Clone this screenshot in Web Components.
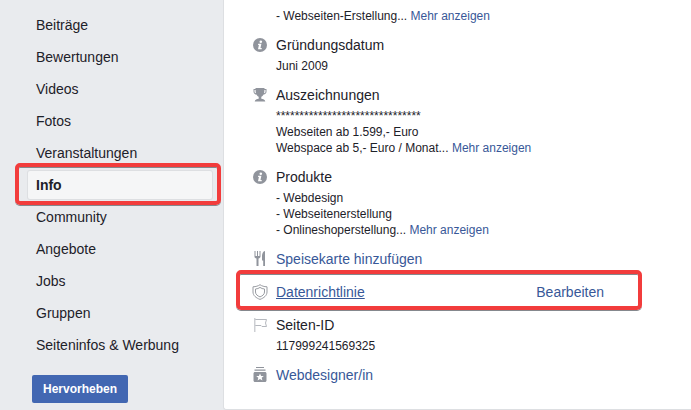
<!DOCTYPE html>
<html lang="de">
<head>
<meta charset="utf-8">
<title>Seiteninfo</title>
<style>
  body { margin: 0; background: #e9ebee; color: #1d2129; font: 14px/20px "Liberation Sans", Arial, sans-serif; }
</style>
</head>
<body>
<page-layout>
  <page-nav slot="nav">
    <nav-item>Beiträge</nav-item>
    <nav-item>Bewertungen</nav-item>
    <nav-item>Videos</nav-item>
    <nav-item>Fotos</nav-item>
    <nav-item>Veranstaltungen</nav-item>
    <nav-item current>Info</nav-item>
    <nav-item>Community</nav-item>
    <nav-item>Angebote</nav-item>
    <nav-item>Jobs</nav-item>
    <nav-item>Gruppen</nav-item>
    <nav-item>Seiteninfos &amp; Werbung</nav-item>
    <promote-button slot="action">Hervorheben</promote-button>
  </page-nav>
  <info-card>
    <info-row><text-line more>- Webseiten-Erstellung...</text-line></info-row>
    <info-row icon="info" heading="Gründungsdatum"><text-line>Juni 2009</text-line></info-row>
    <info-row icon="trophy" heading="Auszeichnungen">
      <text-line>*******************************</text-line>
      <text-line>Webseiten ab 1.599,- Euro</text-line>
      <text-line more>Webspace ab 5,- Euro / Monat...</text-line>
    </info-row>
    <info-row icon="info" heading="Produkte">
      <text-line>- Webdesign</text-line>
      <text-line>- Webseitenerstellung</text-line>
      <text-line more>- Onlineshoperstellung...</text-line>
    </info-row>
    <info-row icon="menu" heading="Speisekarte hinzufügen" link></info-row>
    <info-row icon="shield" heading="Datenrichtlinie" link marked action="Bearbeiten"></info-row>
    <info-row icon="flag" heading="Seiten-ID"><text-line>117999241569325</text-line></info-row>
    <info-row icon="category" heading="Webdesigner/in" link></info-row>
  </info-card>
</page-layout>

<script>
const define = (name, html) => {
  customElements.define(name, class extends HTMLElement {
    connectedCallback() {
      if (this.shadowRoot) return;
      const root = this.attachShadow({ mode: "open" });
      root.innerHTML = typeof html === "function" ? html(this) : html;
    }
  });
};

const icons = {
  info: `<circle cx="8" cy="8" r="7" fill="#90949c"/><circle cx="8.8" cy="4.7" r="1.3" fill="#fff"/><path d="M6.200 6.800h3.200L8.500 11h1.200v1.200H6l.9-4.200h-.9z" fill="#fff"/>`,
  trophy: `<path fill="#90949c" d="M3.500 1h9v1h2v2.500c0 1.700-1.200 2.900-2.900 3C11 8.700 10 9.400 9.300 9.700v2.100c1.900.2 3.700 1 4 2.700H2.700c.3-1.700 2.100-2.500 4-2.700V9.700C6 9.400 5 8.700 4.400 7.500c-1.700-.1-2.900-1.300-2.900-3V2h2z"/><path fill="#fff" d="M2.500 3.100h1.100c0 1.200.1 2.200.4 3.100-1-.2-1.500-.8-1.500-1.800zM13.500 3.100h-1.100c0 1.200-.1 2.200-.4 3.100 1-.2 1.500-.8 1.500-1.800z"/>`,
  menu: `<path fill="#90949c" d="M2.500 0h1v5H5V0h1v5h1.500V0h1v5.500C8.500 6.700 7.700 7.300 6.500 7.500V15h-2V7.500C3.300 7.300 2.500 6.700 2.500 5.500zM13 0v15h-1.800V9.500H10V5c0-2.700 1-4.600 3-5z"/>`,
  shield: `<g fill="none" stroke="#999ca2" stroke-linejoin="round"><path d="M8 .7C6.200 2 3.900 2.700 1 2.800V8c0 3.600 3.200 6 7 7.400 3.800-1.400 7-3.800 7-7.400V2.800C12.100 2.700 9.800 2 8 .7z"/><path d="M8 3.400C6.700 4.400 5.200 4.900 3.500 5V8c0 2.300 2 3.900 4.500 4.900 2.500-1 4.500-2.600 4.500-4.900V5C10.800 4.900 9.300 4.400 8 3.400z"/></g>`,
  flag: `<path fill="none" stroke="#b5b8be" d="M3 2.500h11.500l-1 3.500 1 3.500H10l-1-1H3"/><path fill="#cdcfd3" d="M2 1h1.500v14H2z"/>`,
  category: `<path fill="#90949c" d="M4 0h8v1H4zM2.500 2.500h11v1.300h-11zM3 5h10c.8 0 1.500.7 1.500 1.500v7c0 .8-.7 1.500-1.500 1.500H3c-.8 0-1.500-.7-1.500-1.500v-7C1.500 5.700 2.200 5 3 5z"/><path fill="#fff" d="m8 6.400 1.100 2.500 2.700.2-2.100 1.700.7 2.700L8 12l-2.400 1.500.7-2.700-2.100-1.700 2.700-.2z"/>`
};

const linkStyle = `a { color: #385898; text-decoration: none; } a:hover { text-decoration: underline; }`;
const markStyle = `
  position: absolute; box-sizing: border-box; border: 4px solid #f23c3c;
  border-radius: 5px; box-shadow: 0 1px 0 #85888d, inset 0 1px 0 #85888d; pointer-events: none;`;

define("page-layout", `
  <style>
    :host { display: grid; grid-template-columns: 223px minmax(0, 1fr); }
  </style>
  <slot name="nav"></slot><slot></slot>`);

define("page-nav", `
  <style>
    :host { display: block; padding: 11px 11px 0 28px; }
    nav { display: flex; flex-direction: column; gap: 4px; }
    .action { margin: 16px 0 0 4px; }
  </style>
  <nav aria-label="Seite"><slot></slot></nav>
  <div class="action"><slot name="action"></slot></div>`);

define("nav-item", el => `
  <style>
    :host { display: block; position: relative; }
    a { display: block; padding: 4px 8px; color: inherit; text-decoration: none; border-radius: 2px; }
    a[aria-current] { font-weight: bold; background: #f5f6f7; box-shadow: 0 0 0 1px #dddfe2; }
    .mark { ${markStyle} inset: -8px -9px -6px -13px; }
  </style>
  <a href="#" ${el.hasAttribute("current") ? 'aria-current="page"' : ""}><slot></slot></a>
  ${el.hasAttribute("current") ? '<div class="mark"></div>' : ""}`);

define("promote-button", `
  <style>
    :host { display: inline-block; vertical-align: top; }
    button { display: block; padding: 4px 11px; border: 0; border-radius: 2px; background: #4267b2; color: #fff; font: bold 12px/20px "Liberation Sans", Arial, sans-serif; }
  </style>
  <button type="button"><slot></slot></button>`);

define("info-card", `
  <style>
    :host { display: flex; flex-direction: column; gap: 11px; padding: 8px 87px 22px 28px; background: #fff; border: solid #dddfe2; border-width: 0 0 1px 1px; border-bottom-left-radius: 3px; }
  </style>
  <slot></slot>`);

define("text-line", el => `
  <style>
    :host { display: block; font-size: 12px; line-height: 16px; }
    ${linkStyle}
  </style>
  <slot></slot>${el.hasAttribute("more") ? ' <a href="#">Mehr anzeigen</a>' : ""}`);

define("info-row", el => {
  const { heading, icon, action } = Object.fromEntries([...el.attributes].map(a => [a.name, a.value]));
  const marked = el.hasAttribute("marked");
  const title = el.hasAttribute("link") ? `<a href="#">${heading}</a>` : heading;
  return `
  <style>
    :host { display: grid; grid-template-columns: 16px minmax(0, 1fr) auto; column-gap: 8px; position: relative; }
    svg { display: block; width: 16px; height: 16px; margin-top: 2px; }
    .content { grid-column: 2; display: flex; flex-direction: column; gap: 3px; }
    .heading { line-height: 20px; }
    :host([link]) { min-height: 22px; }
    ${linkStyle}
    :host([marked]) .heading a { text-decoration: underline; }
    .mark { ${markStyle} inset: -12px -38px -6px -16px; }
  </style>
  ${icon ? `<svg viewBox="0 0 16 16" aria-hidden="true">${icons[icon]}</svg>` : ""}
  <div class="content">
    ${heading ? `<div class="heading">${title}</div>` : ""}
    ${el.childElementCount || !heading ? "<div><slot></slot></div>" : ""}
  </div>
  ${action ? `<a href="#">${action}</a>` : ""}
  ${marked ? '<div class="mark"></div>' : ""}`;
});
</script>
</body>
</html>
